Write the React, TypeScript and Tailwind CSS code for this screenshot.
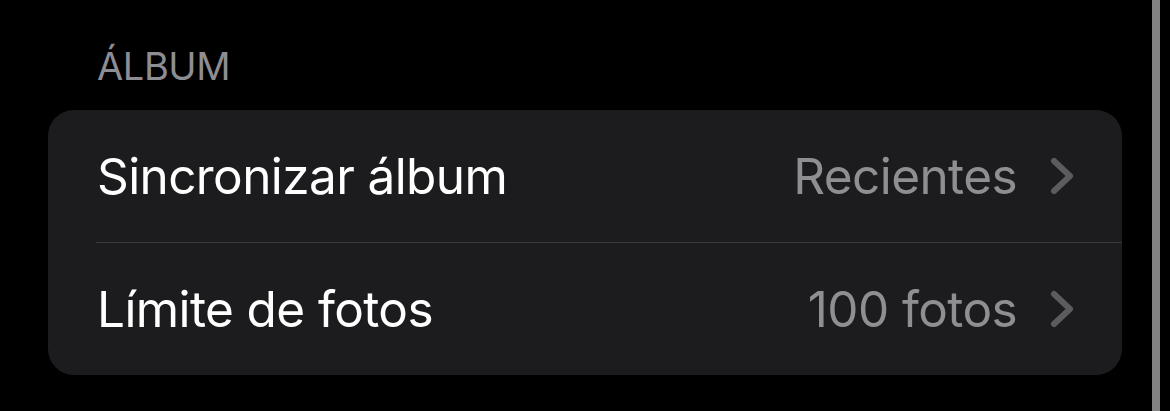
import React from "react";

const rows = [
  { label: "Sincronizar álbum", value: "Recientes" },
  { label: "Límite de fotos", value: "100 fotos" },
];

function Chevron() {
  return (
    <svg width="24" height="38" viewBox="0 0 24 38" fill="none" className="shrink-0">
      <polyline
        points="4,4 20,19 4,34"
        stroke="#5b5b60"
        strokeWidth="6"
        strokeLinecap="round"
        strokeLinejoin="round"
      />
    </svg>
  );
}

export default function App() {
  return (
    <div
      className="flex h-[411px] w-[1170px] bg-black"
      style={{ fontFamily: "Inter, 'Noto Sans', sans-serif" }}
    >
      <div className="flex-1 pl-[48px] pr-[30px] pt-[42px]">
        <h3 className="pl-[49px] text-[38px] leading-[48px] tracking-[-0.4px] text-[#8d8d93]">ÁLBUM</h3>
        <div className="mt-[20px] overflow-hidden rounded-[26px] bg-[#1c1c1e]">
          {rows.map((r, i) => (
            <div key={r.label}>
              {i > 0 && <div className="ml-[48px] h-px bg-[#3a3a3c]" />}
              <div className="flex h-[132px] items-center pl-[49px] pr-[48px]">
                <span className="flex-1 text-[49.5px] tracking-[-0.6px] text-white">{r.label}</span>
                <span className="mr-[33px] text-[49.5px] tracking-[-0.6px] text-[#8e8e93]">{r.value}</span>
                <Chevron />
              </div>
            </div>
          ))}
        </div>
      </div>
      <div className="mr-[10px] w-[8px] bg-[#838383]" />
    </div>
  );
}
